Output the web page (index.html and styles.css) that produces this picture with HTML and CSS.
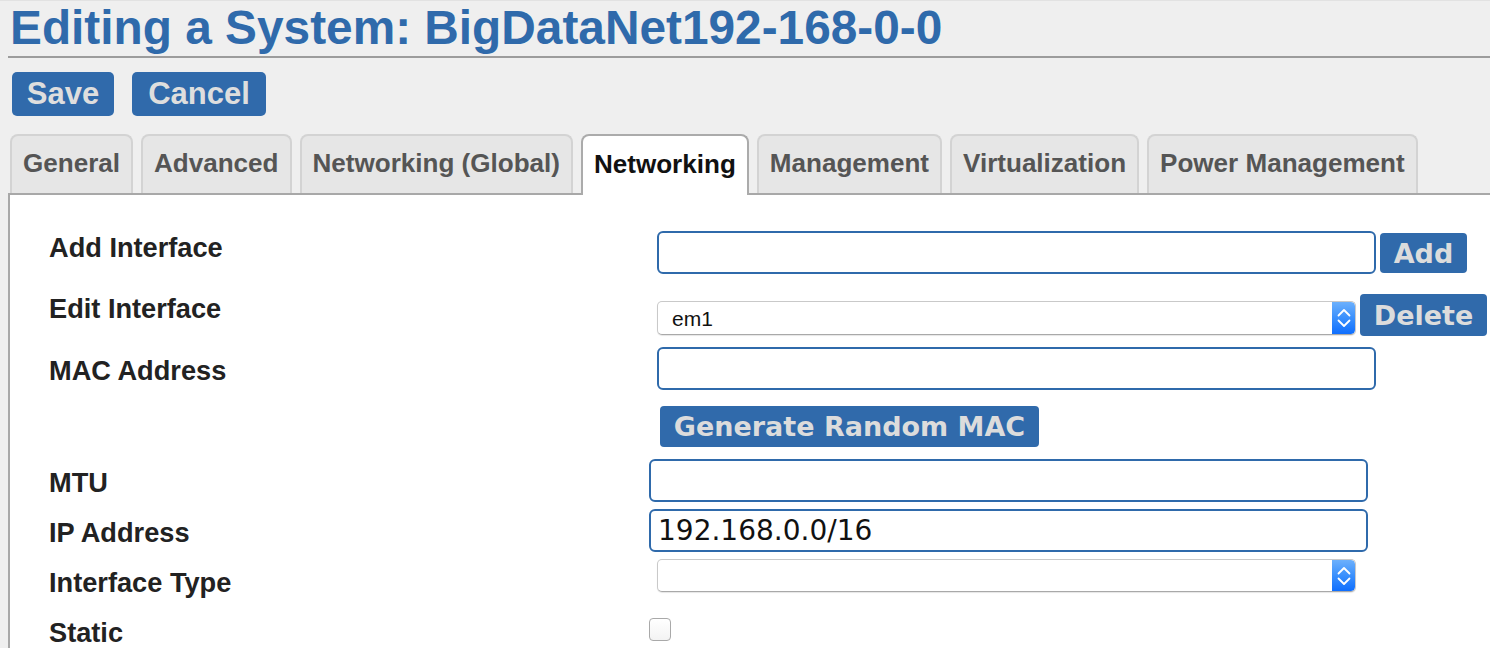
FILE: index.html
```html
<!DOCTYPE html>
<html>
<head>
<meta charset="utf-8">
<title>Editing a System</title>
<link rel="stylesheet" href="styles.css">
</head>
<body>
<h1 class="title">Editing a System: BigDataNet192-168-0-0</h1>
<div class="actions">
  <button class="btn btn-lg btn-save">Save</button>
  <button class="btn btn-lg btn-cancel">Cancel</button>
</div>
<ul class="tabs">
  <li class="tab">General</li>
  <li class="tab">Advanced</li>
  <li class="tab">Networking (Global)</li>
  <li class="tab active">Networking</li>
  <li class="tab">Management</li>
  <li class="tab">Virtualization</li>
  <li class="tab">Power Management</li>
</ul>
<div class="panel">
  <div class="row row-add">
    <label class="lbl">Add Interface</label>
    <div class="ctl ctl-indent">
      <input class="txt txt-add" type="text">
      <button class="btn btn-sm btn-add">Add</button>
    </div>
  </div>
  <div class="row row-edit">
    <label class="lbl">Edit Interface</label>
    <div class="ctl ctl-indent">
      <div class="sel sel-edit">
        <select class="sel-input"><option>em1</option></select>
        <span class="sel-arrow"><svg width="14" height="24" viewBox="0 0 14 24"><path d="M1.5 9.5 L7 4 L12.5 9.5 M1.5 14.5 L7 20 L12.5 14.5" fill="none" stroke="#fff" stroke-width="1.8" stroke-linecap="round" stroke-linejoin="round"/></svg></span>
      </div>
      <button class="btn btn-sm btn-delete">Delete</button>
    </div>
  </div>
  <div class="row row-mac">
    <label class="lbl">MAC Address</label>
    <div class="ctl ctl-indent">
      <input class="txt txt-top2" type="text">
    </div>
  </div>
  <div class="row row-gen">
    <span class="lbl"></span>
    <div class="ctl">
      <button class="btn btn-sm btn-gen">Generate Random MAC</button>
    </div>
  </div>
  <div class="row row-std">
    <label class="lbl">MTU</label>
    <div class="ctl">
      <input class="txt txt-top2" type="text">
    </div>
  </div>
  <div class="row row-std">
    <label class="lbl">IP Address</label>
    <div class="ctl">
      <input class="txt txt-top2" type="text" value="192.168.0.0/16">
    </div>
  </div>
  <div class="row row-std">
    <label class="lbl">Interface Type</label>
    <div class="ctl ctl-indent">
      <div class="sel sel-type">
        <select class="sel-input"><option></option></select>
        <span class="sel-arrow"><svg width="14" height="24" viewBox="0 0 14 24"><path d="M1.5 9.5 L7 4 L12.5 9.5 M1.5 14.5 L7 20 L12.5 14.5" fill="none" stroke="#fff" stroke-width="1.8" stroke-linecap="round" stroke-linejoin="round"/></svg></span>
      </div>
    </div>
  </div>
  <div class="row row-last">
    <label class="lbl">Static</label>
    <div class="ctl">
      <input class="chk" type="checkbox">
    </div>
  </div>
</div>
</body>
</html>
```

FILE: styles.css
```css
html, body {
  margin: 0;
  padding: 0;
}
body {
  background: #efefef;
  border-top: 1px solid #e2e2e2;
  font-family: "Liberation Sans", Arial, sans-serif;
  overflow: hidden;
}

.title {
  margin: 0 0 0 8px;
  padding: 2px 0 3px 2px;
  font-size: 47.8px;
  line-height: 50px;
  font-weight: bold;
  color: #2f6aab;
  border-bottom: 2px solid #9c9c9c;
  white-space: nowrap;
}

.actions {
  display: flex;
  gap: 18px;
  margin: 14px 0 0 12px;
}

.btn {
  background: #306aab;
  border: 0;
  margin: 0;
  color: #dedede;
  font-weight: bold;
  cursor: pointer;
  padding: 0;
  white-space: nowrap;
}
.btn-lg {
  height: 44px;
  border-radius: 5px;
  font-family: "Liberation Sans", Arial, sans-serif;
  font-size: 31px;
  line-height: 44px;
}
.btn-save { width: 102px; }
.btn-cancel { width: 134px; }

.btn-sm {
  border-radius: 4px;
  font-family: "DejaVu Sans", Verdana, sans-serif;
  font-size: 27px;
  color: #dcdcdc;
}
.btn-add {
  width: 87px;
  height: 40px;
  margin: 11px 0 0 4px;
}
.btn-delete {
  width: 127px;
  height: 42px;
  margin: 11px 0 0 4px;
}
.btn-gen {
  width: 379px;
  height: 41px;
  margin: 6px 0 0 11px;
}

.tabs {
  display: flex;
  align-items: flex-end;
  gap: 8px;
  list-style: none;
  margin: 18px 0 0 10px;
  padding: 0;
  height: 59px;
}
.tab {
  padding: 0 11px 3px;
  border: 2px solid #d3d3d3;
  border-bottom: 0;
  border-radius: 8px 8px 0 0;
  background: #e6e6e6;
  color: #555;
  font-size: 26.06px;
  font-weight: bold;
  line-height: 54px;
  white-space: nowrap;
}
.tab.active {
  background: #fff;
  color: #111;
  border-color: #ababab;
  line-height: 56px;
  margin-bottom: -2px;
  position: relative;
  z-index: 1;
}

.panel {
  background: #fff;
  border-top: 2px solid #a8a8a8;
  border-left: 2px solid #a8a8a8;
  margin-left: 8px;
  padding: 27px 0 0 39px;
  height: 426px;
}

.row {
  display: flex;
  align-items: flex-start;
}
.row-add { height: 61px; }
.row-edit { height: 62px; }
.row-mac { height: 55px; }
.row-gen { height: 57px; }
.row-std { height: 50px; }
.row-last { height: 41px; }

.lbl {
  flex: none;
  width: 600px;
  margin-top: 11px;
  font-size: 27.2px;
  line-height: 30px;
  font-weight: bold;
  color: #222;
  white-space: nowrap;
}

.ctl {
  display: flex;
  align-items: flex-start;
}
.ctl-indent { margin-left: 8px; }

.txt {
  box-sizing: border-box;
  width: 719px;
  height: 43px;
  margin: 2px 0 0 0;
  border: 2px solid #2f6aab;
  border-radius: 6px;
  padding: 0 7px;
  background: #fff;
  color: #111;
  font-family: "DejaVu Sans", Verdana, sans-serif;
  font-size: 28px;
  outline: none;
}
.txt-add { margin-top: 9px; }

.sel {
  box-sizing: border-box;
  display: flex;
  width: 699px;
  border: 1px solid #c9c9c9;
  border-bottom-color: #a9a9a9;
  border-radius: 5px;
  background: #fff;
  box-shadow: 0 1px 1px rgba(0, 0, 0, 0.1);
  overflow: hidden;
}
.sel-edit { height: 34px; margin-top: 18px; }
.sel-type { height: 33px; margin-top: 2px; }

.sel-input {
  flex: 1;
  appearance: none;
  -webkit-appearance: none;
  border: 0;
  margin: 0;
  padding: 0 0 0 14px;
  background: transparent;
  color: #111;
  font-family: "Liberation Sans", Arial, sans-serif;
  font-size: 21px;
  outline: none;
}
.sel-arrow {
  flex: none;
  width: 23px;
  display: flex;
  align-items: center;
  justify-content: center;
  background: linear-gradient(#6cb0fc, #3a90fd 50%, #0f6efe);
  border-radius: 0 4px 4px 0;
}

.chk {
  appearance: none;
  -webkit-appearance: none;
  box-sizing: border-box;
  width: 22px;
  height: 23px;
  margin: 11px 0 0 0;
  border: 1px solid #a9a9a9;
  border-radius: 4px;
  background: linear-gradient(#ffffff, #f3f3f3);
}
```
